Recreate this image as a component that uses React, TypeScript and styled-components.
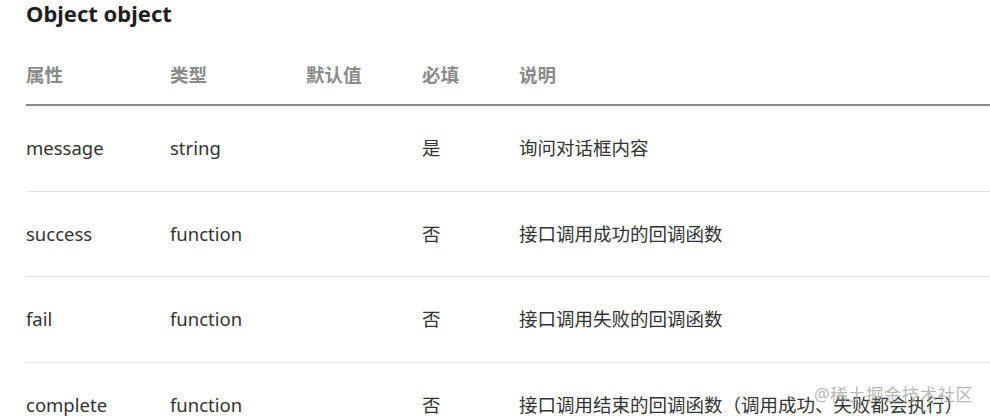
import styled, { createGlobalStyle } from 'styled-components'

const GlobalStyle = createGlobalStyle`
  body {
    margin: 0;
    background: #ffffff;
    font-family: 'Noto Sans', 'Noto Sans CJK SC', sans-serif;
    color: #333333;
    overflow: hidden;
  }
`

const Page = styled.div`
  position: relative;
  width: 990px;
  height: 418px;
  padding: 1px 0 0 26px;
  box-sizing: border-box;
  overflow: hidden;
`

const Title = styled.h3`
  margin: 0;
  font-size: 22px;
  line-height: 24px;
  font-weight: 700;
  color: #1f1f1f;
`

const Table = styled.table`
  margin-top: 39px;
  width: 1000px;
  border-collapse: collapse;
  table-layout: fixed;
  font-size: 18.5px;
`

const HeadCell = styled.th<{ $width?: number }>`
  width: ${p => (p.$width ? `${p.$width}px` : 'auto')};
  text-align: left;
  padding: 0 0 18px 0;
  line-height: 22px;
  font-weight: 700;
  color: #8a8a8a;
  border-bottom: 2px solid #8a8a8a;
`

const Row = styled.tr`
  border-bottom: 1px solid #e3e3e3;
`

const Cell = styled.td`
  padding: 32px 0;
  line-height: 20.5px;
  color: #333333;
  white-space: nowrap;
`

const Watermark = styled.div`
  position: absolute;
  left: 814px;
  top: 381px;
  font-size: 17.5px;
  letter-spacing: 0.4px;
  color: rgba(160, 160, 160, 0.75);
`

const columns = [
  { label: '属性', width: 144 },
  { label: '类型', width: 136 },
  { label: '默认值', width: 116 },
  { label: '必填', width: 97 },
  { label: '说明' },
]

const rows = [
  { name: 'message', type: 'string', def: '', required: '是', desc: '询问对话框内容' },
  { name: 'success', type: 'function', def: '', required: '否', desc: '接口调用成功的回调函数' },
  { name: 'fail', type: 'function', def: '', required: '否', desc: '接口调用失败的回调函数' },
  { name: 'complete', type: 'function', def: '', required: '否', desc: '接口调用结束的回调函数（调用成功、失败都会执行）' },
]

const App = () => {
  return (
    <Page>
      <GlobalStyle />
      <Title>Object object</Title>
      <Table>
        <thead>
          <tr>
            {columns.map(c => (
              <HeadCell key={c.label} $width={c.width}>{c.label}</HeadCell>
            ))}
          </tr>
        </thead>
        <tbody>
          {rows.map(r => (
            <Row key={r.name}>
              <Cell>{r.name}</Cell>
              <Cell>{r.type}</Cell>
              <Cell>{r.def}</Cell>
              <Cell>{r.required}</Cell>
              <Cell>{r.desc}</Cell>
            </Row>
          ))}
        </tbody>
      </Table>
      <Watermark>@稀土掘金技术社区</Watermark>
    </Page>
  )
}

export default App
